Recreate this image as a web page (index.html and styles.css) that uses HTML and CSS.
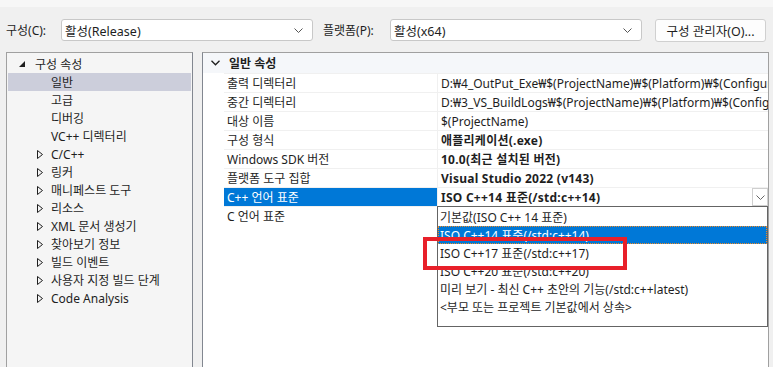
FILE: index.html
```html
<!DOCTYPE html>
<html lang="ko">
<head>
<meta charset="utf-8">
<link rel="stylesheet" href="styles.css">
</head>
<body>
<div class="topstrip"></div>
<div class="toolbar">
  <span class="lbl lbl-c">구성(C):</span>
  <div class="combo combo-c"><span>활성(Release)</span><svg class="chev" width="9" height="5" viewBox="0 0 9 5"><path d="M0.5 0.5 L4.5 4.5 L8.5 0.5" fill="none" stroke="#555" stroke-width="1"/></svg></div>
  <span class="lbl lbl-p">플랫폼(P):</span>
  <div class="combo combo-p"><span>활성(x64)</span><svg class="chev" width="9" height="5" viewBox="0 0 9 5"><path d="M0.5 0.5 L4.5 4.5 L8.5 0.5" fill="none" stroke="#555" stroke-width="1"/></svg></div>
  <div class="btn">구성 관리자(O)...</div>
</div>
<div class="main">
  <div class="tree">
    <div class="trow lvl0"><svg class="exp" width="6" height="6" viewBox="0 0 6 6"><path d="M6 0 L6 6 L0 6 Z" fill="#1e1e1e"/></svg><span>구성 속성</span></div>
    <div class="trow lvl1 sel"><span>일반</span></div>
    <div class="trow lvl1"><span>고급</span></div>
    <div class="trow lvl1"><span>디버깅</span></div>
    <div class="trow lvl1"><span>VC++ 디렉터리</span></div>
    <div class="trow lvl1 has"><svg class="exp" width="6" height="9" viewBox="0 0 6 9"><path d="M0.5 0.5 L5.5 4.5 L0.5 8.5 Z" fill="none" stroke="#1e1e1e" stroke-width="1"/></svg><span>C/C++</span></div>
    <div class="trow lvl1 has"><svg class="exp" width="6" height="9" viewBox="0 0 6 9"><path d="M0.5 0.5 L5.5 4.5 L0.5 8.5 Z" fill="none" stroke="#1e1e1e" stroke-width="1"/></svg><span>링커</span></div>
    <div class="trow lvl1 has"><svg class="exp" width="6" height="9" viewBox="0 0 6 9"><path d="M0.5 0.5 L5.5 4.5 L0.5 8.5 Z" fill="none" stroke="#1e1e1e" stroke-width="1"/></svg><span>매니페스트 도구</span></div>
    <div class="trow lvl1 has"><svg class="exp" width="6" height="9" viewBox="0 0 6 9"><path d="M0.5 0.5 L5.5 4.5 L0.5 8.5 Z" fill="none" stroke="#1e1e1e" stroke-width="1"/></svg><span>리소스</span></div>
    <div class="trow lvl1 has"><svg class="exp" width="6" height="9" viewBox="0 0 6 9"><path d="M0.5 0.5 L5.5 4.5 L0.5 8.5 Z" fill="none" stroke="#1e1e1e" stroke-width="1"/></svg><span>XML 문서 생성기</span></div>
    <div class="trow lvl1 has"><svg class="exp" width="6" height="9" viewBox="0 0 6 9"><path d="M0.5 0.5 L5.5 4.5 L0.5 8.5 Z" fill="none" stroke="#1e1e1e" stroke-width="1"/></svg><span>찾아보기 정보</span></div>
    <div class="trow lvl1 has"><svg class="exp" width="6" height="9" viewBox="0 0 6 9"><path d="M0.5 0.5 L5.5 4.5 L0.5 8.5 Z" fill="none" stroke="#1e1e1e" stroke-width="1"/></svg><span>빌드 이벤트</span></div>
    <div class="trow lvl1 has"><svg class="exp" width="6" height="9" viewBox="0 0 6 9"><path d="M0.5 0.5 L5.5 4.5 L0.5 8.5 Z" fill="none" stroke="#1e1e1e" stroke-width="1"/></svg><span>사용자 지정 빌드 단계</span></div>
    <div class="trow lvl1 has"><svg class="exp" width="6" height="9" viewBox="0 0 6 9"><path d="M0.5 0.5 L5.5 4.5 L0.5 8.5 Z" fill="none" stroke="#1e1e1e" stroke-width="1"/></svg><span>Code Analysis</span></div>
  </div>
  <div class="grid">
    <div class="ghead"><svg class="gchev" width="9" height="6" viewBox="0 0 9 6"><path d="M0.5 0.8 L4.5 4.8 L8.5 0.8" fill="none" stroke="#1e1e1e" stroke-width="1.3"/></svg><span>일반 속성</span></div>
    <div class="prow"><div class="pname">출력 디렉터리</div><div class="pval">D:₩4_OutPut_Exe₩$(ProjectName)₩$(Platform)₩$(Configur</div></div>
    <div class="prow"><div class="pname">중간 디렉터리</div><div class="pval">D:₩3_VS_BuildLogs₩$(ProjectName)₩$(Platform)₩$(Config</div></div>
    <div class="prow"><div class="pname">대상 이름</div><div class="pval">$(ProjectName)</div></div>
    <div class="prow"><div class="pname">구성 형식</div><div class="pval b">애플리케이션(.exe)</div></div>
    <div class="prow"><div class="pname">Windows SDK 버전</div><div class="pval b">10.0(최근 설치된 버전)</div></div>
    <div class="prow"><div class="pname">플랫폼 도구 집합</div><div class="pval b">Visual Studio 2022 (v143)</div></div>
    <div class="prow active"><div class="pname">C++ 언어 표준</div><div class="pval b">ISO C++14 표준(/std:c++14)<div class="ddbtn"><svg width="9" height="5" viewBox="0 0 9 5"><path d="M0.5 0.5 L4.5 4.5 L8.5 0.5" fill="none" stroke="#666" stroke-width="1"/></svg></div></div></div>
    <div class="prow"><div class="pname">C 언어 표준</div><div class="pval"></div></div>

    <div class="dropdown">
      <div class="ditem">기본값(ISO C++ 14 표준)</div>
      <div class="ditem hl">ISO C++14 표준(/std:c++14)</div>
      <div class="ditem">ISO C++17 표준(/std:c++17)</div>
      <div class="ditem">ISO C++20 표준(/std:c++20)</div>
      <div class="ditem">미리 보기 - 최신 C++ 초안의 기능(/std:c++latest)</div>
      <div class="ditem">&lt;부모 또는 프로젝트 기본값에서 상속&gt;</div>
    </div>
  </div>
</div>
<div class="redbox"></div>
</body>
</html>
```

FILE: styles.css
```css
* { box-sizing: border-box; }
html, body { margin: 0; padding: 0; }
body {
  width: 773px;
  height: 367px;
  overflow: hidden;
  background: #f0f0f0;
  font-family: "Segoe UI", "Noto Sans", "Noto Sans CJK KR", sans-serif;
  font-size: 12px;
  color: #1e1e1e;
  position: relative;
}
.topstrip { height: 7px; background: #f7f7f7; }
.toolbar {
  display: flex;
  align-items: center;
  height: 34px;
  padding: 12px 0 0 6px;
}
.lbl { white-space: nowrap; }
.lbl-c { width: 55px; }
.lbl-p { width: 67px; margin-left: 10px; }
.combo {
  height: 22px;
  background: #fff;
  border: 1px solid #c8c8c8;
  border-radius: 3px;
  display: flex;
  align-items: center;
  justify-content: space-between;
  padding: 0 9px 0 3px;
  font-size: 12.5px;
}
.combo-c { width: 252px; }
.combo-p { width: 252px; }
.chev { display: block; }
.btn {
  margin-left: 13px;
  width: 111px;
  height: 23px;
  background: #fdfdfd;
  border: 1px solid #d0d0d0;
  border-radius: 3px;
  display: flex;
  align-items: center;
  justify-content: center;
  font-size: 12.5px;
}
.main {
  display: flex;
  gap: 9px;
  margin-top: 11px;
  padding-left: 6px;
}
.tree {
  width: 187px;
  height: 330px;
  background: #f5f5f5;
  border: 1px solid #a0a0a0;
  border-right-color: #828790;
  padding: 2px 1px 0 1px;
}
.trow {
  height: 18px;
  display: flex;
  align-items: center;
  white-space: nowrap;
}
.trow.lvl0 { padding-left: 11px; }
.trow.lvl0 .exp { margin-right: 10px; }
.trow.lvl1 { padding-left: 43px; }
.trow.lvl1.has { padding-left: 29px; }
.trow.lvl1.has .exp { margin-right: 8px; }
.trow.sel { background: #cccedb; }
.grid {
  position: relative;
  width: 567px;
  height: 330px;
  background: #fff;
  border: 1px solid #a0a0a0;
  border-left-color: #828790;
}
.ghead {
  height: 20px;
  background: #f5f7fa;
  display: flex;
  align-items: center;
  padding-left: 8px;
  font-weight: bold;
}
.gchev { margin-right: 9px; }
.prow {
  display: flex;
  height: 19px;
  border-top: 1px solid #f0f0f0;
  margin-left: 21px;
}
.pname {
  width: 214px;
  padding-left: 3px;
  display: flex;
  align-items: center;
  white-space: nowrap;
  border-right: 1px solid #f0f0f0;
}
.pval {
  flex: 1;
  padding-left: 3px;
  display: flex;
  align-items: center;
  white-space: nowrap;
  overflow: hidden;
  position: relative;
}
.pval.b { font-weight: bold; letter-spacing: 0.25px; }
.prow.active .pname { background: #0078d7; color: #fff; }
.ddbtn {
  position: absolute;
  right: 0;
  top: 0;
  width: 16px;
  height: 18px;
  border: 1px solid #cfcfcf;
  background: #fff;
  display: flex;
  align-items: center;
  justify-content: center;
}
.dropdown {
  position: absolute;
  left: 234px;
  top: 153px;
  width: 331px;
  height: 121px;
  background: #fff;
  border: 1px solid #646464;
  padding-top: 1px;
}
.ditem {
  height: 18px;
  display: flex;
  align-items: center;
  padding-left: 2px;
  white-space: nowrap;
}
.ditem.hl {
  background: #0078d7;
  color: #fff;
  outline: 1px dotted #f08a24;
  outline-offset: -1px;
}
.redbox {
  position: absolute;
  left: 423px;
  top: 237px;
  width: 204px;
  height: 33px;
  border: 4px solid #e8202a;
}
```
